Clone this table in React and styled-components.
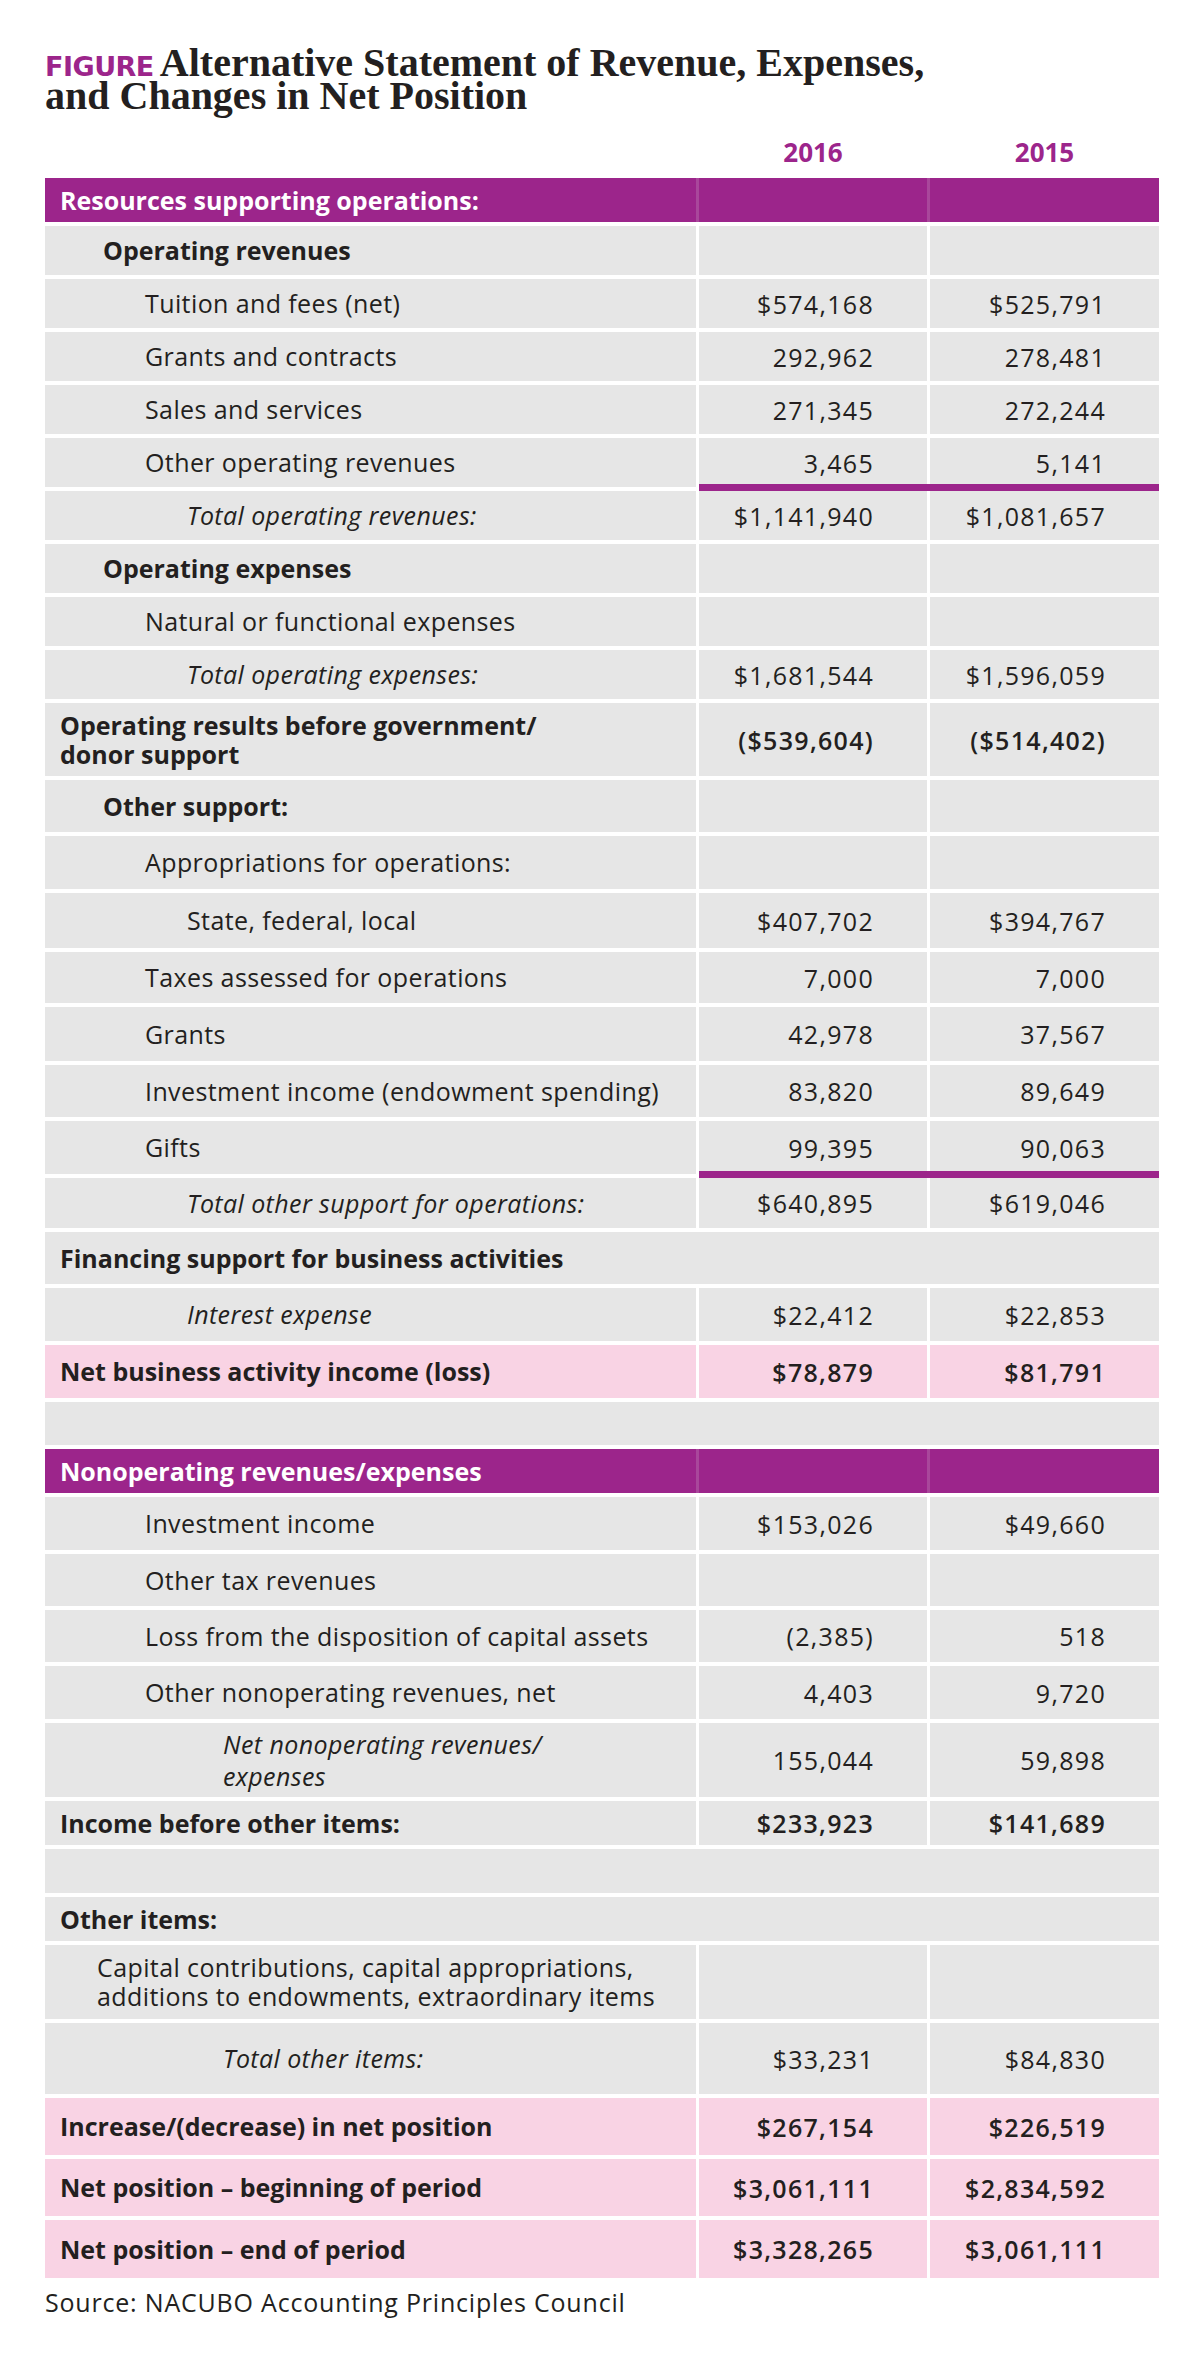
import React from "react";
import styled, { createGlobalStyle, css } from "styled-components";

const PURPLE = "#9c258b";
const INK = "#231f20";

const GlobalStyle = createGlobalStyle`
  html, body {
    margin: 0;
    padding: 0;
    background: #ffffff;
  }
  body {
    font-family: "Open Sans", "Liberation Sans", sans-serif;
    color: ${INK};
  }
`;

const Page = styled.div`
  width: 1200px;
  padding: 46px 41px 40px 45px;
  box-sizing: border-box;
`;

const Title = styled.h1`
  margin: 0;
  width: 1114px;
  font-family: "Liberation Serif", "Times New Roman", serif;
  font-weight: 700;
  font-size: 40px;
  line-height: 33px;
  letter-spacing: 0;
  color: ${INK};
`;

const Kicker = styled.span`
  font-family: "DejaVu Sans", "Liberation Sans", sans-serif;
  font-weight: 700;
  font-size: 27px;
  line-height: 20px;
  letter-spacing: -0.5px;
  color: ${PURPLE};
  margin-right: 6px;
`;

const Grid = styled.div`
  display: grid;
  grid-template-columns: 651px 228px 229px;
  column-gap: 3px;
`;

const YearRow = styled(Grid)`
  margin-top: 27px;
  margin-bottom: 13px;
`;

const Year = styled.div`
  font-weight: 700;
  font-size: 26px;
  line-height: 26px;
  color: ${PURPLE};
  text-align: center;
`;

const Table = styled.div`
  display: flex;
  flex-direction: column;
  gap: 4px;
`;

const Row = styled(Grid)`
  height: ${(p) => p.$h}px;
  ${(p) =>
    p.$header &&
    css`
      background: #a9479b;
    `}
`;

const toneBg = {
  gray: "#e6e6e6",
  pink: "#f9d3e4",
  purple: PURPLE,
};

const Cell = styled.div`
  position: relative;
  display: flex;
  align-items: center;
  box-sizing: border-box;
  background: ${(p) => toneBg[p.$tone]};
  ${(p) =>
    p.$span &&
    css`
      grid-column: 1 / -1;
    `}
`;

const Label = styled(Cell)`
  padding-left: ${(p) => p.$pad}px;
  padding-right: 20px;
  font-size: 25px;
  line-height: ${(p) => p.$lh || 29}px;
  letter-spacing: ${(p) => (p.$bold ? "0" : "0.4px")};
  font-weight: ${(p) => (p.$bold ? 700 : 400)};
  font-style: ${(p) => (p.$italic ? "italic" : "normal")};
  color: ${(p) => (p.$tone === "purple" ? "#ffffff" : INK)};
`;

const Num = styled(Cell)`
  justify-content: flex-end;
  padding-right: 53px;
  font-size: 25px;
  letter-spacing: 1.3px;
  font-weight: ${(p) => (p.$bold ? 600 : 400)};
  color: ${INK};
  ${(p) =>
    p.$rule &&
    css`
      &::after {
        content: "";
        position: absolute;
        left: 0;
        right: ${p.$last ? "0" : "-3px"};
        bottom: -4px;
        height: 7px;
        background: ${PURPLE};
      }
    `}
`;

const Source = styled.p`
  margin: 9px 0 0;
  font-size: 25px;
  line-height: 30px;
  letter-spacing: 0.8px;
  color: ${INK};
`;

const pad = { 0: 15, 1: 58, 2: 100, 3: 142, 4: 178 };

const rows = [
  { type: "header", label: "Resources supporting operations:", h: 44 },
  { label: "Operating revenues", lv: 1, bold: true, h: 49 },
  { label: "Tuition and fees (net)", lv: 2, v: ["$574,168", "$525,791"], h: 49 },
  { label: "Grants and contracts", lv: 2, v: ["292,962", "278,481"], h: 49 },
  { label: "Sales and services", lv: 2, v: ["271,345", "272,244"], h: 49 },
  { label: "Other operating revenues", lv: 2, v: ["3,465", "5,141"], h: 49, rule: true },
  { label: "Total operating revenues:", lv: 3, italic: true, v: ["$1,141,940", "$1,081,657"], h: 49 },
  { label: "Operating expenses", lv: 1, bold: true, h: 49 },
  { label: "Natural or functional expenses", lv: 2, h: 49 },
  { label: "Total operating expenses:", lv: 3, italic: true, v: ["$1,681,544", "$1,596,059"], h: 49 },
  {
    label: ["Operating results before government/", "donor support"],
    lv: 0,
    bold: true,
    boldNum: true,
    v: ["($539,604)", "($514,402)"],
    h: 73,
  },
  { label: "Other support:", lv: 1, bold: true, h: 52 },
  { label: "Appropriations for operations:", lv: 2, h: 53 },
  { label: "State, federal, local", lv: 3, v: ["$407,702", "$394,767"], h: 55 },
  { label: "Taxes assessed for operations", lv: 2, v: ["7,000", "7,000"], h: 51 },
  { label: "Grants", lv: 2, v: ["42,978", "37,567"], h: 54 },
  { label: "Investment income (endowment spending)", lv: 2, v: ["83,820", "89,649"], h: 52 },
  { label: "Gifts", lv: 2, v: ["99,395", "90,063"], h: 53, rule: true },
  { label: "Total other support for operations:", lv: 3, italic: true, v: ["$640,895", "$619,046"], h: 50 },
  { type: "span", label: "Financing support for business activities", lv: 0, bold: true, h: 52 },
  { label: "Interest expense", lv: 3, italic: true, v: ["$22,412", "$22,853"], h: 53 },
  { label: "Net business activity income (loss)", lv: 0, bold: true, boldNum: true, tone: "pink", v: ["$78,879", "$81,791"], h: 53 },
  { type: "span", label: "", h: 43 },
  { type: "header", label: "Nonoperating revenues/expenses", h: 44 },
  { label: "Investment income", lv: 2, v: ["$153,026", "$49,660"], h: 53 },
  { label: "Other tax revenues", lv: 2, h: 52 },
  { label: "Loss from the disposition of capital assets", lv: 2, v: ["(2,385)", "518"], h: 52 },
  { label: "Other nonoperating revenues, net", lv: 2, v: ["4,403", "9,720"], h: 53 },
  { label: ["Net nonoperating revenues/", "expenses"], lv: 4, italic: true, lh: 32, v: ["155,044", "59,898"], h: 74 },
  { label: "Income before other items:", lv: 0, bold: true, boldNum: true, v: ["$233,923", "$141,689"], h: 44 },
  { type: "span", label: "", h: 44 },
  { type: "span", label: "Other items:", lv: 0, bold: true, h: 44 },
  {
    label: ["Capital contributions, capital appropriations,", "additions to endowments, extraordinary items"],
    pad: 52,
    h: 74,
  },
  { label: "Total other items:", lv: 4, italic: true, v: ["$33,231", "$84,830"], h: 71 },
  { label: "Increase/(decrease) in net position", lv: 0, bold: true, boldNum: true, tone: "pink", v: ["$267,154", "$226,519"], h: 57 },
  { label: "Net position \u2013 beginning of period", lv: 0, bold: true, boldNum: true, tone: "pink", v: ["$3,061,111", "$2,834,592"], h: 57 },
  { label: "Net position \u2013 end of period", lv: 0, bold: true, boldNum: true, tone: "pink", v: ["$3,328,265", "$3,061,111"], h: 58 },
];

const renderLabel = (label) =>
  Array.isArray(label)
    ? label.map((line, i) => (
        <React.Fragment key={i}>
          {i > 0 && <br />}
          {line}
        </React.Fragment>
      ))
    : label;

const StatementRow = ({ row }) => {
  const tone = row.type === "header" ? "purple" : row.tone || "gray";
  const padding = row.type === "header" ? 15 : row.pad ?? pad[row.lv ?? 0];
  const bold = row.type === "header" || row.bold;

  if (row.type === "span") {
    return (
      <Row $h={row.h}>
        <Label $span $tone={tone} $pad={padding} $bold={bold}>
          {row.label}
        </Label>
      </Row>
    );
  }

  const values = row.v || ["", ""];
  return (
    <Row $h={row.h} $header={row.type === "header"}>
      <Label $tone={tone} $pad={padding} $bold={bold} $italic={row.italic} $lh={row.lh}>
        <span>{renderLabel(row.label)}</span>
      </Label>
      <Num $tone={tone} $bold={row.boldNum} $rule={row.rule}>
        {values[0]}
      </Num>
      <Num $tone={tone} $bold={row.boldNum} $rule={row.rule} $last>
        {values[1]}
      </Num>
    </Row>
  );
};

const App = () => (
  <>
    <GlobalStyle />
    <Page>
      <Title>
        <Kicker>FIGURE</Kicker>
        Alternative Statement of Revenue, Expenses,
        <br />
        and Changes in Net Position
      </Title>
      <YearRow>
        <div />
        <Year>2016</Year>
        <Year>2015</Year>
      </YearRow>
      <Table>
        {rows.map((row, i) => (
          <StatementRow key={i} row={row} />
        ))}
      </Table>
      <Source>Source: NACUBO Accounting Principles Council</Source>
    </Page>
  </>
);

export default App;
